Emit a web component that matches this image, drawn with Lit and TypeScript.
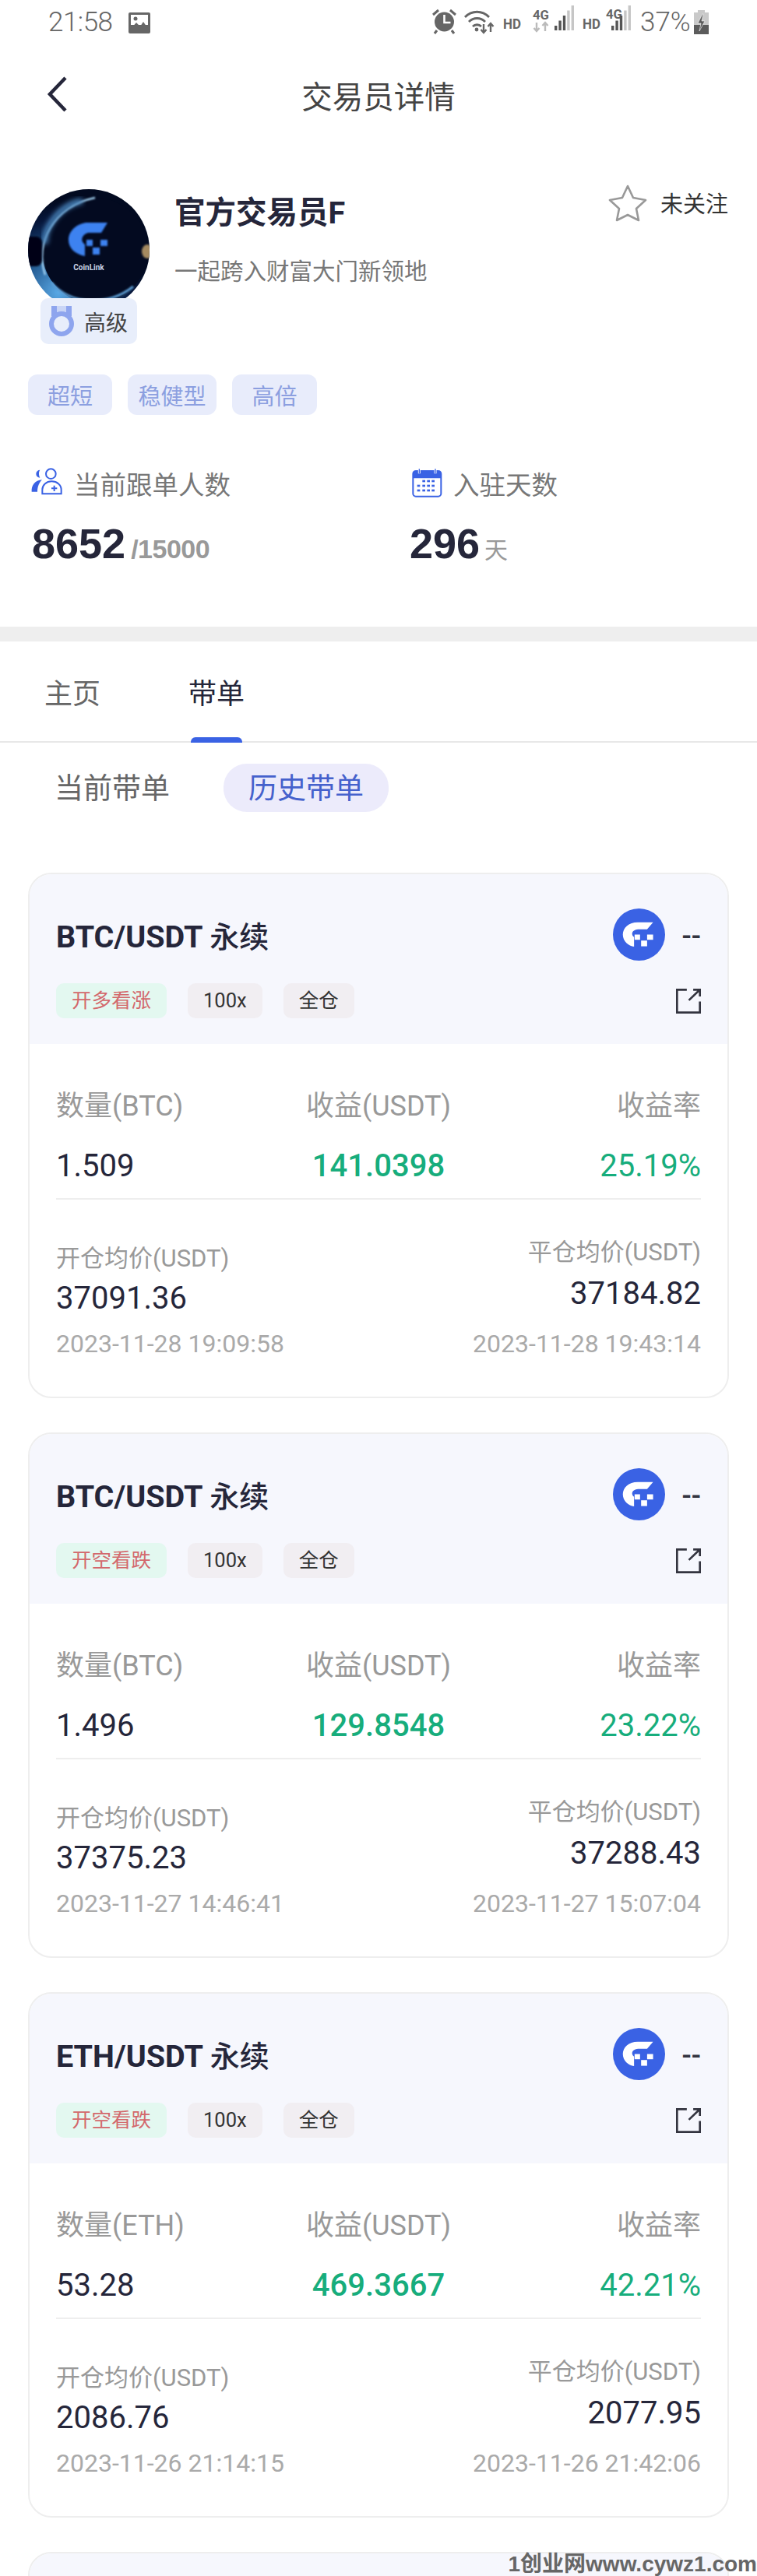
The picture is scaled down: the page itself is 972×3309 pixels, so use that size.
import { LitElement, css, html, svg } from 'lit'
import { customElement } from 'lit/decorators.js'

interface Order {
  pair: string
  side: string
  coin: string
  qty: string
  profit: string
  rate: string
  open: string
  close: string
  openAt: string
  closeAt: string
}

const orders: Order[] = [
  { pair: 'BTC/USDT', side: '开多看涨', coin: 'BTC', qty: '1.509', profit: '141.0398', rate: '25.19%', open: '37091.36', close: '37184.82', openAt: '2023-11-28 19:09:58', closeAt: '2023-11-28 19:43:14' },
  { pair: 'BTC/USDT', side: '开空看跌', coin: 'BTC', qty: '1.496', profit: '129.8548', rate: '23.22%', open: '37375.23', close: '37288.43', openAt: '2023-11-27 14:46:41', closeAt: '2023-11-27 15:07:04' },
  { pair: 'ETH/USDT', side: '开空看跌', coin: 'ETH', qty: '53.28', profit: '469.3667', rate: '42.21%', open: '2086.76', close: '2077.95', openAt: '2023-11-26 21:14:15', closeAt: '2023-11-26 21:42:06' },
]

const traderTags = [
  { label: '超短', width: 108 },
  { label: '稳健型', width: 114 },
  { label: '高倍', width: 109 },
]

const bars = (x: number, lit: number) => svg`
  ${[0, 1, 2, 3, 4].map(i => {
    const h = 6 + i * 6.5
    return svg`<rect x=${x + i * 5.4} y=${35 - h} width="3.4" height=${h} fill=${i < lit ? '#555' : '#c6c6c6'} />`
  })}
`

const statusIcons = html`
  <svg class="status-icons" width="270" height="50" viewBox="0 0 270 50">
    <g stroke="#666" fill="none" stroke-width="3">
      <path d="M6 15l7-6M35 15l-7-6M11 35l-3 4M30 35l3 4" />
    </g>
    <circle cx="20.5" cy="24" r="12.5" fill="#666" />
    <path d="M20.5 15v10h8" stroke="#fff" stroke-width="2.6" fill="none" />
    <g stroke="#666" fill="none" stroke-width="2.8">
      <path d="M47 18c9-9 22-9 31 0" />
      <path d="M52 24c6-6 15-6 21 0" />
      <path d="M57 30c3-3 8-3 11 0" />
    </g>
    <circle cx="62" cy="34" r="2.4" fill="#666" />
    <path d="M71 27v11M67.5 34l3.5 4 3.5-4M80 37V26M76.5 30l3.5-4 3.5 4" stroke="#666" stroke-width="2.4" fill="none" />
    <text x="96" y="33" class="si" textLength="23" lengthAdjust="spacingAndGlyphs">HD</text>
    <text x="134" y="21" class="si4" textLength="21" lengthAdjust="spacingAndGlyphs">4G</text>
    <path d="M139 25v11M135.500 32l3.500 4 3.500-4M150 36V25M146.500 29l3.500-4 3.500 4" stroke="#bbb" stroke-width="2.400" fill="none" />
    ${bars(162, 3)}
    <text x="198" y="33" class="si" textLength="23" lengthAdjust="spacingAndGlyphs">HD</text>
    <text x="228" y="20" class="si4" textLength="21" lengthAdjust="spacingAndGlyphs">4G</text>
    ${bars(235, 3)}
  </svg>
`

const battery = html`
  <svg width="19" height="32" viewBox="0 0 19 32">
    <rect x="5" y="0" width="9" height="3" fill="#c9c9c9" />
    <rect x="0" y="3" width="19" height="16" fill="#c9c9c9" />
    <rect x="0" y="19" width="19" height="12" fill="#5c5c5c" />
    <path d="M11 5L5 17h4l-2 10 7-13h-4l2-9z" fill="#5c5c5c" stroke="#fff" stroke-width=".6" />
  </svg>
`

const coinLogo = html`
  <svg class="coin" width="67" height="67" viewBox="0 0 200 200">
    <circle cx="100" cy="100" r="100" fill="#3a62e4" />
    <path d="M154 53H95C60 53 38 75 38 100c0 25 22 45 43 46v-36c-13-10-9-28 15-30h35z" fill="#fff" />
    <rect x="83" y="100" width="21" height="20" fill="#fff" />
    <rect x="131" y="100" width="23" height="20" fill="#fff" />
    <rect x="108" y="123" width="23" height="22" fill="#fff" />
  </svg>
`

const externalIcon = html`
  <svg class="ext" width="32" height="32" viewBox="0 0 97 97" fill="none" stroke="#33343f" stroke-width="8">
    <path d="M42 4H4v89h89V50" />
    <path d="M50 45L93 4M67 4h26v26" />
  </svg>
`

const avatar = html`
  <svg class="avatar" width="156" height="156" viewBox="0 0 156 156">
    <defs>
      <clipPath id="av"><circle cx="78" cy="78" r="78" /></clipPath>
      <radialGradient id="avbg" cx="25%" cy="85%" r="75%">
        <stop offset="0" stop-color="#5aa9e6" />
        <stop offset=".45" stop-color="#1c4f85" />
        <stop offset=".8" stop-color="#06163a" />
        <stop offset="1" stop-color="#020a20" />
      </radialGradient>
      <filter id="soft"><feGaussianBlur stdDeviation="1.200" /></filter>
      <filter id="softer"><feGaussianBlur stdDeviation="3" /></filter>
    </defs>
    <g clip-path="url(#av)">
      <rect width="156" height="156" fill="url(#avbg)" />
      <circle cx="86" cy="79" r="68" fill="#030a20" />
      <path d="M22 110C8 70 32 22 86 11" stroke="#a5d4f4" stroke-width="2.400" fill="none" filter="url(#soft)" />
      <path d="M30 120C55 150 105 150 135 125" stroke="#5b9bd2" stroke-width="3" fill="none" filter="url(#soft)" />
      <path d="M22 70C20 50 40 20 70 15" stroke="#4a86c0" stroke-width="7" fill="none" filter="url(#softer)" />
      <rect x="-6" y="61" width="24" height="38" rx="8" fill="#020612" filter="url(#soft)" />
      <ellipse cx="153" cy="80" rx="7" ry="9" fill="#a58a60" filter="url(#soft)" />
      <g fill="#3c82f0" filter="url(#soft)" transform="translate(52 43)">
        <path d="M50 0H22C6 3 0 14 0 22c0 10 7 18 21 21V28c-6-4-5-12 4-15h17z" />
        <rect x="23" y="22" width="8" height="8" />
        <rect x="41" y="22" width="9" height="8" />
        <rect x="31" y="32" width="9" height="9" />
      </g>
      <text x="78" y="104" class="av-text">CoinLink</text>
    </g>
  </svg>
`

const medal = html`
  <svg width="36" height="42" viewBox="0 0 36 42" fill="none">
    <path d="M5 1h7v13H5zM24 1h7v13h-7z" fill="#8ea5ee" />
    <path d="M12 1h12v9H12z" fill="#c9d5f6" />
    <circle cx="18" cy="24" r="13" stroke="#8ea5ee" stroke-width="6" />
  </svg>
`

const followersIcon = html`
  <svg class="stat-icon" width="46" height="40" viewBox="36 27 138 120" fill="none">
    <path d="M70 38a15 15 0 0 0 0 30c-2-4-4-9-4-15s1-11 4-15z" fill="#3a62e4" />
    <path d="M38 122c-2-24 12-44 40-46-10 9-18 26-18 46z" fill="#3a62e4" />
    <circle cx="112" cy="53" r="19" stroke="#3a62e4" stroke-width="6" />
    <path d="M79 130v-16c0-18 15-32 36-32s37 14 37 32v16z" stroke="#3a62e4" stroke-width="6" />
    <path d="M125 98v22M114 109h22" stroke="#3a62e4" stroke-width="6" />
  </svg>
`

const calendarIcon = html`
  <svg class="stat-icon cal" width="39" height="39" viewBox="27 24 117 117">
    <rect x="31" y="36" width="108" height="98" rx="11" fill="#fff" stroke="#3a62e4" stroke-width="6" />
    <path d="M31 64V47c0-6 5-11 11-11h86c6 0 11 5 11 11v17z" fill="#3a62e4" />
    <path d="M55 28v18M117 28v18" stroke="#fff" stroke-width="9" />
    <path d="M55 28v17M117 28v17" stroke="#3a62e4" stroke-width="4" />
    <g fill="#3a62e4">
      ${[72, 90, 108].map(x => svg`<rect x=${x - 5} y="71" width="11" height="8" />`)}
      ${[52, 72, 90, 108].map(x => svg`<rect x=${x - 5} y="89" width="11" height="8" />`)}
      ${[52, 72, 90, 108].map(x => svg`<rect x=${x - 5} y="107" width="11" height="8" />`)}
    </g>
  </svg>
`

@customElement('app-root')
export class AppRoot extends LitElement {
  static styles = css`
  :host {
    display: block;
    position: relative;
    height: 3309px;
    overflow: hidden;
    background: #fff;
    font-family: Roboto, "Noto Sans CJK SC", sans-serif;
    color: #25263a;
  }

  .status {
    height: 58px;
    padding: 0 62px;
    display: flex;
    align-items: center;
    color: #666;
    font-size: 35px;
    line-height: 58px;
  }

  .status .time {
    font-weight: 300;
    width: 87px;
    letter-spacing: -0.5px;
  }

  .status .pic {
    margin-left: 16px;
  }

  .status-right {
    margin-left: auto;
    margin-right: 0;
    display: flex;
    align-items: center;
  }

  .si {
    font: 700 19px Roboto, sans-serif;
    fill: #666;
  }

  .si4 {
    font: 700 16px Roboto, sans-serif;
    fill: #666;
  }

  .pct {
    font-weight: 300;
    margin: 0 6px 0 2px;
    width: 63px;
    white-space: nowrap;
  }

  .nav {
    height: 130px;
    box-sizing: border-box;
    padding-bottom: 3px;
    display: flex;
    align-items: center;
    justify-content: center;
    position: relative;
    font-size: 39.5px;
    color: #444;
  }

  .back {
    position: absolute;
    left: 60px;
    top: 40px;
  }

  .profile {
    padding: 55px 37px 80px 36px;
  }

  .who {
    display: flex;
    align-items: flex-start;
  }

  .avatar-wrap {
    position: relative;
    width: 156px;
    height: 199px;
    flex: none;
  }

  .avatar {
    display: block;
  }

  .av-text {
    font: 700 10px Roboto, sans-serif;
    fill: #c8d2e4;
    text-anchor: middle;
  }

  .badge {
    position: absolute;
    left: 16px;
    top: 140px;
    width: 124px;
    height: 59px;
    box-sizing: border-box;
    padding-left: 9px;
    background: #e8eefb;
    border-radius: 10px;
    display: flex;
    align-items: center;
    gap: 11px;
    font-size: 28px;
    color: #444;
  }

  .info {
    margin-left: 32px;
    flex: 1;
  }

  .name {
    padding-top: 2px;
    font-size: 39.5px;
    line-height: 58px;
    font-weight: 700;
    color: #25263a;
  }

  .bio {
    margin-top: 26px;
    font-size: 29.5px;
    line-height: 40px;
    color: #777;
  }

  .follow {
    margin-top: -8px;
    display: flex;
    align-items: center;
    gap: 17px;
    font-size: 29px;
    color: #333;
    line-height: 48px;
  }

  .follow span {
    padding-top: 4px;
  }

  .tags {
    margin-top: 39px;
    display: flex;
    gap: 20px;
  }

  .tag {
    height: 52px;
    border-radius: 12px;
    background: #e8ecfb;
    color: #8c9fe0;
    font-size: 29px;
    display: flex;
    align-items: center;
    justify-content: center;
  }

  .stats {
    margin-top: 68px;
    display: grid;
    grid-template-columns: 485px 1fr;
  }

  .stat-label {
    display: flex;
    align-items: center;
    height: 38px;
    gap: 9px;
    font-size: 33.5px;
    color: #777;
  }

  .stat-icon {
    margin-left: 4px;
    flex: none;
  }

  .stat-icon.cal {
    margin: 0 5px 0 8px;
  }

  .stat-value {
    margin: 32px 0 0 5px;
    display: flex;
    align-items: baseline;
    height: 54px;
    line-height: 54px;
    font-family: "Liberation Sans", "Noto Sans CJK SC", sans-serif;
    font-size: 54px;
    font-weight: 700;
  }

  .stat-value span {
    margin-left: 7px;
    font-size: 34px;
    color: #999;
    letter-spacing: -0.5px;
  }

  .stat-value .unit {
    margin-left: 6px;
    font-size: 30px;
    font-weight: 400;
    font-family: "Noto Sans CJK SC", sans-serif;
  }

  .band {
    height: 19px;
    background: #eee;
  }

  .tabs {
    height: 130px;
    box-sizing: border-box;
    border-bottom: 2px solid #e8e8e8;
    padding-left: 57px;
    display: flex;
    gap: 113px;
    font-size: 36px;
    color: #666;
  }

  .tab {
    position: relative;
    padding-top: 10px;
    line-height: 116px;
  }

  .tab.on {
    color: #25263a;
  }

  .tab.on::after {
    content: '';
    position: absolute;
    left: 3px;
    right: 3px;
    bottom: -2px;
    height: 7px;
    border-radius: 6px 6px 0 0;
    background: #3a62e4;
  }

  .modes {
    padding: 27px 0 0 70px;
    display: flex;
    align-items: center;
    gap: 69px;
    font-size: 37px;
    color: #666;
  }

  .mode {
    height: 62px;
    box-sizing: border-box;
    line-height: 58px;
    padding-top: 4px;
  }

  .mode.on {
    padding: 4px 32px 0;
    border-radius: 30px;
    background: #ecebfb;
    color: #4561cc;
  }

  .list {
    margin: 78px 36px 0;
    display: flex;
    flex-direction: column;
    gap: 44px;
  }

  .card {
    border: 2px solid #eee;
    border-radius: 30px;
    overflow: hidden;
    background: #fff;
  }

  .head {
    height: 218px;
    box-sizing: border-box;
    padding: 44px 34px 0 34px;
    background: #f6f7fd;
  }

  .title-row {
    display: flex;
    align-items: center;
    height: 67px;
  }

  .title {
    font-size: 39.5px;
    font-weight: 700;
    color: #25263a;
  }

  .title i {
    font-style: normal;
    font-weight: 500;
    font-size: 38px;
  }

  .coin {
    margin-left: auto;
    display: block;
  }

  .dash {
    margin-left: 22px;
    font-size: 36px;
    font-weight: 500;
    color: #33343f;
    line-height: 67px;
    padding-top: 6px;
  }

  .chips {
    margin-top: 29px;
    display: flex;
    align-items: center;
    gap: 27px;
  }

  .chip {
    height: 45px;
    line-height: 45px;
    padding: 0 20px;
    border-radius: 10px;
    font-size: 25.5px;
    background: #f1eef2;
    color: #333;
  }

  .chip.side {
    padding: 0 20px;
    background: #e3f8f0;
    color: #d3686c;
  }

  .ext {
    margin-left: auto;
    display: block;
  }

  .body {
    padding: 58px 34px 50px 34px;
  }

  .cols {
    display: grid;
    grid-template-columns: 1fr auto 1fr;
    font-size: 36px;
    line-height: 44px;
    color: #999;
  }

  .cols .c {
    text-align: center;
  }

  .cols .r {
    text-align: right;
  }

  .vals {
    margin-top: 33px;
    padding-bottom: 19px;
    border-bottom: 2px solid #eee;
    font-size: 40px;
    color: #25263a;
  }

  .up {
    color: #17ad7c;
  }

  .vals .c {
    font-weight: 500;
  }

  .prices {
    padding-top: 50px;
    display: flex;
    justify-content: space-between;
    align-items: flex-end;
  }

  .p-label {
    font-size: 31px;
    line-height: 36px;
    color: #999;
  }

  .p-value {
    font-size: 40px;
    line-height: 44px;
    color: #25263a;
    margin-top: 11px;
  }

  .p-date {
    font-size: 32px;
    line-height: 36px;
    color: #aaa;
    margin-top: 18px;
  }

  .p-right {
    text-align: right;
  }

  .p-right .p-value {
    margin-top: 13px;
  }

  .p-right .p-date {
    margin-top: 24px;
  }

  .mark {
    position: absolute;
    right: 0;
    bottom: 0;
    font-family: "Liberation Sans", "Noto Sans CJK SC", sans-serif;
    font-size: 28px;
    line-height: 30px;
    font-weight: 700;
    color: #666;
    white-space: nowrap;
  }
`

  renderCard(o: Order) {
    return html`
      <div class="card">
        <div class="head">
          <div class="title-row">
            <div class="title">${o.pair} <i>永续</i></div>
            ${coinLogo}
            <div class="dash">--</div>
          </div>
          <div class="chips">
            <div class="chip side">${o.side}</div>
            <div class="chip">100x</div>
            <div class="chip">全仓</div>
            ${externalIcon}
          </div>
        </div>
        <div class="body">
          <div class="cols">
            <div>数量(${o.coin})</div>
            <div class="c">收益(USDT)</div>
            <div class="r">收益率</div>
          </div>
          <div class="cols vals">
            <div>${o.qty}</div>
            <div class="c up">${o.profit}</div>
            <div class="r up">${o.rate}</div>
          </div>
          <div class="prices">
            <div>
              <div class="p-label">开仓均价(USDT)</div>
              <div class="p-value">${o.open}</div>
              <div class="p-date">${o.openAt}</div>
            </div>
            <div class="p-right">
              <div class="p-label">平仓均价(USDT)</div>
              <div class="p-value">${o.close}</div>
              <div class="p-date">${o.closeAt}</div>
            </div>
          </div>
        </div>
      </div>
    `
  }

  render() {
    return html`
      <div class="status">
        <div class="time">21:58</div>
        <svg class="pic" width="28" height="27" viewBox="0 0 28 27">
          <rect width="28" height="27" rx="2" fill="#666" />
          <rect x="3" y="3" width="22" height="13" fill="#fff" />
          <circle cx="9" cy="8" r="2.5" fill="#666" />
          <path d="M2 22l8-9 5 5 4-6 7 10z" fill="#666" />
        </svg>
        <div class="status-right">
          ${statusIcons}
          <div class="pct">37%</div>
          ${battery}
        </div>
      </div>

      <div class="nav">
        <svg class="back" width="28" height="46" viewBox="0 0 28 46" fill="none">
          <path d="M24 2L4 23l20 21" stroke="#25263a" stroke-width="4.5" />
        </svg>
        交易员详情
      </div>

      <div class="profile">
        <div class="who">
          <div class="avatar-wrap">
            ${avatar}
            <div class="badge">${medal}<span>高级</span></div>
          </div>
          <div class="info">
            <div class="name">官方交易员F</div>
            <div class="bio">一起跨入财富大门新领地</div>
          </div>
          <div class="follow">
            <svg width="50" height="48" viewBox="0 0 50 48" fill="none">
              <path d="M25 2l7 15 16 3-12 11 3 15-14-7-14 7 3-15L2 20l16-3z" stroke="#999" stroke-width="2.6" stroke-linejoin="round" />
            </svg>
            <span>未关注</span>
          </div>
        </div>
        <div class="tags">
          ${traderTags.map(t => html`<div class="tag" style="width:${t.width}px">${t.label}</div>`)}
        </div>
        <div class="stats">
          <div>
            <div class="stat-label">${followersIcon}当前跟单人数</div>
            <div class="stat-value">8652<span>/15000</span></div>
          </div>
          <div>
            <div class="stat-label">${calendarIcon}入驻天数</div>
            <div class="stat-value">296<span class="unit">天</span></div>
          </div>
        </div>
      </div>

      <div class="band"></div>

      <div class="tabs">
        <div class="tab">主页</div>
        <div class="tab on">带单</div>
      </div>

      <div class="modes">
        <div class="mode">当前带单</div>
        <div class="mode on">历史带单</div>
      </div>

      <div class="list">
        ${orders.map(o => this.renderCard(o))}
        <div class="card"><div class="head"></div></div>
      </div>

      <div class="mark">1创业网www.cywz1.com</div>
    `
  }
}

declare global {
  interface HTMLElementTagNameMap {
    'app-root': AppRoot
  }
}
